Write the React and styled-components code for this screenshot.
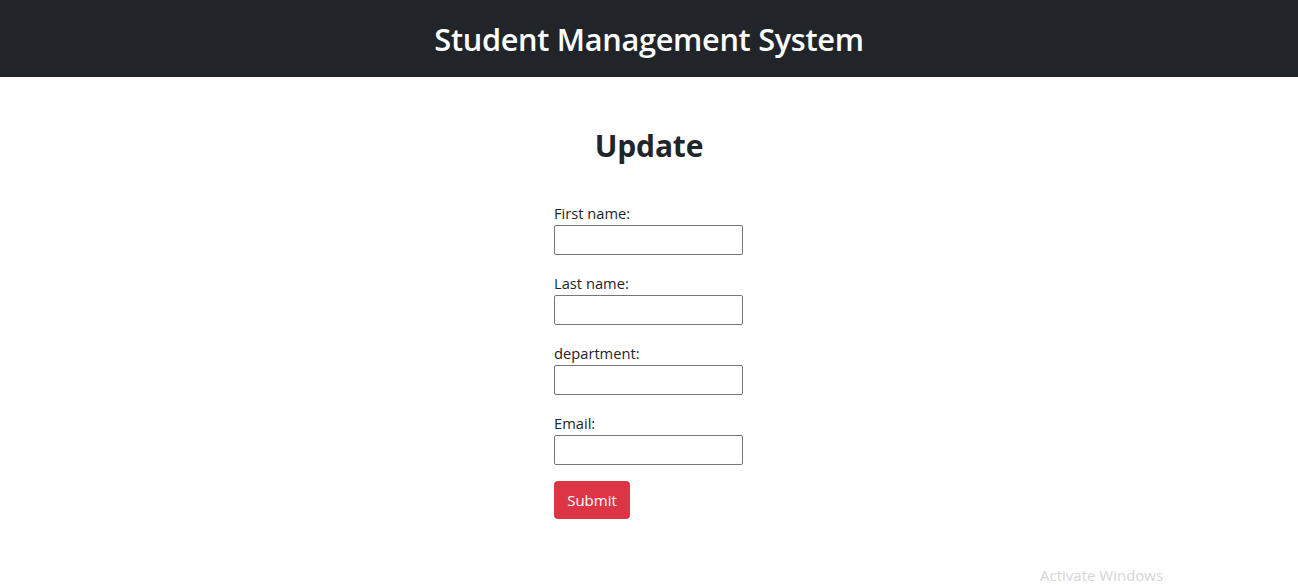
import styled, { createGlobalStyle } from 'styled-components';

const GlobalStyle = createGlobalStyle`
    html, body {
        margin: 0;
        padding: 0;
        background: #fff;
        font-family: 'Open Sans', 'Noto Sans', sans-serif;
        color: #212529;
    }
`;

const Page = styled.div`
    position: relative;
    width: 100%;
    min-height: 585px;
    overflow: hidden;
`;

const Header = styled.header`
    height: 77px;
    background: #212529;
    display: flex;
    align-items: center;
    justify-content: center;
`;

const Brand = styled.h1`
    margin: 0;
    color: #fff;
    font-size: 30.7px;
    font-weight: 600;
    letter-spacing: -0.3px;
`;

const Main = styled.main`
    display: flex;
    flex-direction: column;
    align-items: center;
    padding-top: 50px;
`;

const Title = styled.h2`
    margin: 0 0 36px;
    font-size: 30px;
    line-height: 38px;
    font-weight: 700;
    letter-spacing: -0.2px;
`;

const Form = styled.form`
    width: 189px;
    display: flex;
    flex-direction: column;
    gap: 16px;
    margin-right: 1px;
`;

const Field = styled.div`
    display: flex;
    flex-direction: column;
`;

const Label = styled.label`
    font-size: 14.7px;
    line-height: 24px;
`;

const Input = styled.input`
    box-sizing: border-box;
    width: 189px;
    height: 30px;
    border: 1px solid #767676;
    border-radius: 2px;
    padding: 1px 4px;
    font-size: 14px;
    font-family: inherit;
`;

const Button = styled.button`
    align-self: flex-start;
    width: 76px;
    height: 38px;
    border: none;
    border-radius: 4px;
    background: #dc3545;
    color: #fff;
    font-family: inherit;
    font-size: 15px;
    cursor: pointer;
`;

const Watermark = styled.div`
    position: absolute;
    left: 1040px;
    top: 566px;
    color: #d6d6d6;
    font-size: 15px;
    line-height: 18px;
    white-space: nowrap;
`;

const fields = [
    { id: 'firstName', label: 'First name:' },
    { id: 'lastName', label: 'Last name:' },
    { id: 'department', label: 'department:' },
    { id: 'email', label: 'Email:' },
];

const App = () => (
    <Page>
        <GlobalStyle />
        <Header>
            <Brand>Student Management System</Brand>
        </Header>
        <Main>
            <Title>Update</Title>
            <Form onSubmit={(e) => e.preventDefault()}>
                {fields.map((f) => (
                    <Field key={f.id}>
                        <Label htmlFor={f.id}>{f.label}</Label>
                        <Input id={f.id} type="text" />
                    </Field>
                ))}
                <Button type="submit">Submit</Button>
            </Form>
        </Main>
        <Watermark>Activate Windows</Watermark>
    </Page>
);

export default App;
